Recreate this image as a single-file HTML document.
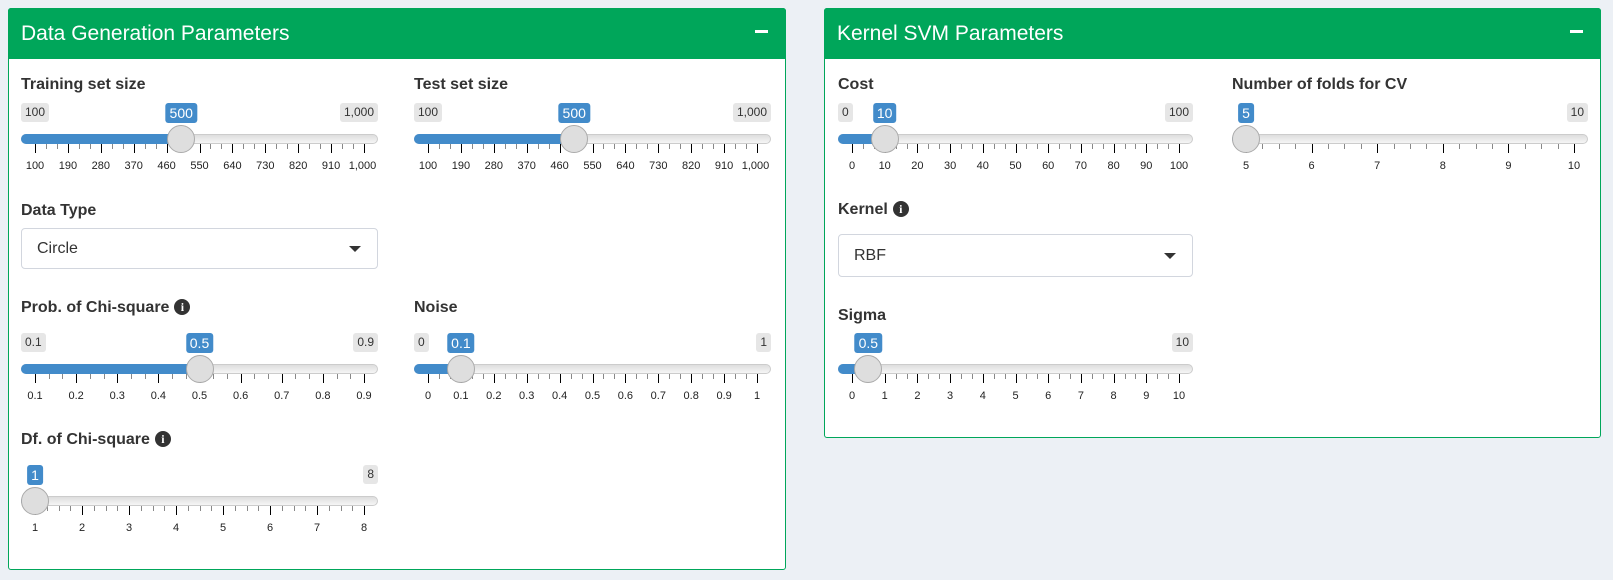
<!DOCTYPE html>
<html><head><meta charset="utf-8">
<style>
*{box-sizing:border-box;margin:0;padding:0}
body{width:1613px;height:580px;background:#ecf0f5;font-family:"Liberation Sans",sans-serif;color:#333;position:relative;overflow:hidden}
.box{position:absolute;top:8px;background:#fff;border:1px solid #00a65a;border-radius:3px}
.hdr{position:absolute;left:-1px;right:-1px;top:-1px;height:51px;background:#00a65a;border-radius:3px 3px 0 0;color:#fff;font-size:21px;line-height:51px;padding-left:13px}
.minus{position:absolute;right:18px;top:22px;width:13px;height:3px;background:#fff}
.lbl{position:absolute;font-weight:bold;font-size:16px;line-height:18px;white-space:nowrap}
.info{display:inline-block;width:16px;height:16px;border-radius:50%;background:#333;color:#fff;font-size:12px;line-height:16px;text-align:center;font-family:"Liberation Serif",serif;font-weight:bold;vertical-align:1px;margin-left:5px}
.sel{position:absolute;height:41px;border:1px solid #d2d6de;border-radius:4px;font-size:16px;line-height:39px;padding-left:15px}
.car{position:absolute;right:16px;top:17px;width:0;height:0;border-left:6px solid transparent;border-right:6px solid transparent;border-top:6px solid #333}
.mm{position:absolute;height:19px;line-height:19px;font-size:12px;background:#e6e6e6;color:#333;padding:0 4px;border-radius:3px}
.val{position:absolute;height:20px;line-height:20px;font-size:14px;background:#428bca;color:#fff;padding:0 4px;border-radius:3px;transform:translateX(-50%)}
.trk{position:absolute;height:10px;border:1px solid #ccc;border-radius:5px;background:linear-gradient(#dedede,#f6f6f6)}
.bar{position:absolute;height:10px;background:#428bca;border-radius:5px 0 0 5px}
.hnd{position:absolute;width:28px;height:28px;border-radius:50%;background:#dedede;border:1px solid #aaa}
.tk{position:absolute;width:1px;background:#000}
.tm{position:absolute;width:1px;background:#888;height:5px}
.gl{position:absolute;font-size:11px;line-height:12px;color:#222;white-space:nowrap;transform:translateX(-50%)}
</style></head><body>
<div class="box" style="left:8px;width:778px;height:562px"><div class="hdr">Data Generation Parameters<div class="minus"></div></div></div>
<div class="box" style="left:824px;width:777px;height:430px"><div class="hdr">Kernel SVM Parameters<div class="minus"></div></div></div>

<div class="lbl" style="left:21px;top:76px">Training set size</div>
<div class="lbl" style="left:414px;top:76px">Test set size</div>
<div class="lbl" style="left:21px;top:202px">Data Type</div>
<div class="sel" style="left:21px;top:228px;width:357px">Circle<div class="car"></div></div>
<div class="lbl" style="left:21px;top:299px">Prob. of Chi-square<span class="info">i</span></div>
<div class="lbl" style="left:414px;top:299px">Noise</div>
<div class="lbl" style="left:21px;top:431px">Df. of Chi-square<span class="info">i</span></div>

<div class="lbl" style="left:838px;top:76px">Cost</div>
<div class="lbl" style="left:1232px;top:76px">Number of folds for CV</div>
<div class="lbl" style="left:838px;top:201px">Kernel<span class="info">i</span></div>
<div class="sel" style="left:838px;top:234px;width:355px;height:43px;line-height:41px">RBF<div class="car" style="top:18px"></div></div>
<div class="lbl" style="left:838px;top:307px">Sigma</div>

<div id="sl"></div>
<script>
function slider(L,W,T,min,max,val,labels,minors,minLab,maxLab,valLab){
  var h='';
  var frac=(val-min)/(max-min);
  var span=W-28, hc=L+14+frac*span;
  if(minLab)h+='<div class="mm" style="left:'+L+'px;top:'+T+'px">'+minLab+'</div>';
  h+='<div class="mm" style="right:'+(1613-L-W)+'px;top:'+T+'px">'+maxLab+'</div>';
  h+='<div class="trk" style="left:'+L+'px;width:'+W+'px;top:'+(T+31)+'px"></div>';
  if(hc-L>1)h+='<div class="bar" style="left:'+L+'px;width:'+(hc-L)+'px;top:'+(T+31)+'px"></div>';
  var n=labels.length-1;
  for(var i=0;i<=n;i++){
    var x=L+14+span*i/n;
    h+='<div class="tk" style="left:'+Math.round(x)+'px;top:'+(T+41)+'px;height:9px"></div>';
    if(i<n)for(var j=1;j<=minors;j++){
      var xm=x+span/n*j/(minors+1);
      h+='<div class="tm" style="left:'+Math.round(xm)+'px;top:'+(T+41)+'px"></div>';
    }
    var lx=x, lw=labels[i].length*6.2/2;
    if(lx-lw<L)lx=L+lw; if(lx+lw>L+W)lx=L+W-lw;
    h+='<div class="gl" style="left:'+lx+'px;top:'+(T+57)+'px">'+labels[i]+'</div>';
  }
  h+='<div class="val" style="left:'+hc+'px;top:'+T+'px">'+valLab+'</div>';
  h+='<div class="hnd" style="left:'+(hc-14)+'px;top:'+(T+22)+'px"></div>';
  return h;
}
var s='';
var big=['100','190','280','370','460','550','640','730','820','910','1,000'];
s+=slider(21,357,103,100,1000,500,big,2,'100','1,000','500');
s+=slider(414,357,103,100,1000,500,big,2,'100','1,000','500');
s+=slider(21,357,333,0.1,0.9,0.5,['0.1','0.2','0.3','0.4','0.5','0.6','0.7','0.8','0.9'],2,'0.1','0.9','0.5');
s+=slider(414,357,333,0,1,0.1,['0','0.1','0.2','0.3','0.4','0.5','0.6','0.7','0.8','0.9','1'],2,'0','1','0.1');
s+=slider(21,357,465,1,8,1,['1','2','3','4','5','6','7','8'],3,'','8','1');
s+=slider(838,355,103,0,100,10,['0','10','20','30','40','50','60','70','80','90','100'],2,'0','100','10');
s+=slider(1232,356,103,5,10,5,['5','6','7','8','9','10'],3,'','10','5');
s+=slider(838,355,333,0,10,0.5,['0','1','2','3','4','5','6','7','8','9','10'],2,'','10','0.5');
document.getElementById('sl').innerHTML=s;
</script>
</body></html>
